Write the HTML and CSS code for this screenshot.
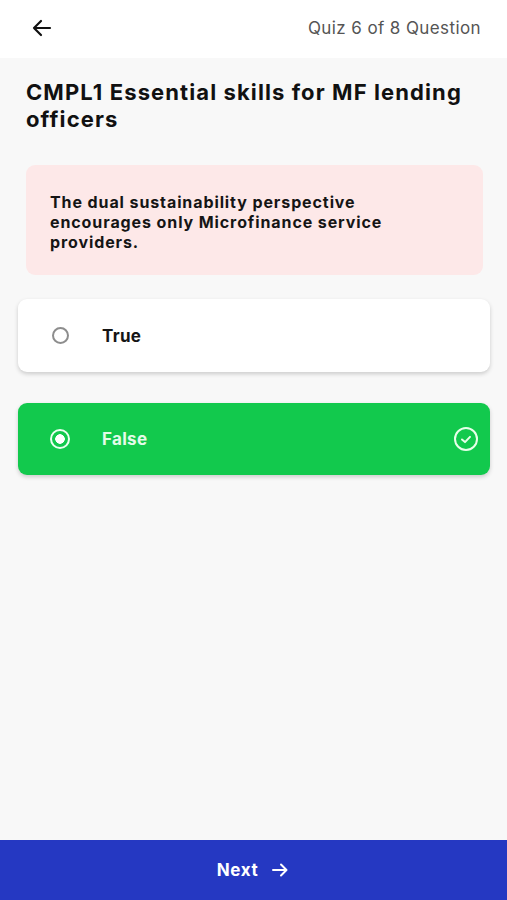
FILE: index.html
```html
<!DOCTYPE html>
<html lang="en">
<head>
    <meta charset="UTF-8">
    <title>Quiz</title>
    <link rel="stylesheet" href="styles.css">
</head>
<body>
    <div class="screen">
        <div class="topbar">
            <svg class="back" width="24" height="24" viewBox="0 0 24 24" fill="none" stroke="#111" stroke-width="2.2" stroke-linecap="round" stroke-linejoin="round">
                <path d="M20 12H4M11 5l-7 7 7 7"/>
            </svg>
            <span class="counter">Quiz 6 of 8 Question</span>
        </div>

        <div class="content">
            <h1 class="title">CMPL1 Essential skills for MF lending officers</h1>

            <div class="question">
                The dual sustainability perspective encourages only Microfinance service providers.
            </div>

            <div class="option">
                <span class="radio"></span>
                <span class="label">True</span>
            </div>

            <div class="option selected">
                <span class="radio"></span>
                <span class="label">False</span>
                <svg class="check" width="26" height="26" viewBox="0 0 26 26" fill="none" stroke="#e8ffe9" stroke-width="2" stroke-linecap="round" stroke-linejoin="round">
                    <circle cx="13" cy="13" r="11"/>
                    <path d="M9 13.5l3 2.6 5-5.2"/>
                </svg>
            </div>
        </div>

        <div class="next-bar">
            <span>Next</span>
            <svg width="20" height="20" viewBox="0 0 20 20" fill="none" stroke="#fff" stroke-width="2" stroke-linecap="round" stroke-linejoin="round">
                <path d="M3 10h13M11 4.5l5.5 5.5-5.5 5.5"/>
            </svg>
        </div>
    </div>
</body>
</html>
```

FILE: styles.css
```css
body {
    margin: 0;
    font-family: Inter, "Noto Sans", sans-serif;
    background: #f8f8f8;
}

.screen {
    display: flex;
    flex-direction: column;
    height: 900px;
}

.topbar {
    display: flex;
    align-items: center;
    justify-content: space-between;
    height: 58px;
    padding: 0 26px 0 30px;
    background: #fff;
}

.back {
    margin-top: -2px;
}

.counter {
    font-size: 17px;
    letter-spacing: 0.4px;
    color: #555;
    margin-top: -3px;
}

.content {
    flex: 1;
    padding: 21px 17px 0 18px;
}

.title {
    margin: 0 0 32px 8px;
    font-size: 22px;
    font-weight: 700;
    line-height: 27px;
    letter-spacing: 1.1px;
    color: #111;
}

.question {
    margin: 0 7px 24px 8px;
    padding: 27px 80px 23px 24px;
    background: #fde8e8;
    border-radius: 9px;
    font-size: 16px;
    font-weight: 700;
    line-height: 20px;
    letter-spacing: 0.9px;
    color: #151515;
}

.option {
    display: flex;
    align-items: center;
    height: 73px;
    padding: 0 11px 0 34px;
    margin-bottom: 31px;
    background: #fff;
    border-radius: 9px;
    box-shadow: 0 2px 4px rgba(0, 0, 0, 0.18);
}

.radio {
    width: 17px;
    height: 17px;
    border: 2px solid #8d8d8d;
    border-radius: 50%;
    box-sizing: border-box;
    margin-right: 33px;
}

.label {
    flex: 1;
    font-size: 17px;
    font-weight: 700;
    letter-spacing: 0.3px;
    color: #151515;
}

.option.selected {
    background: #12c94d;
    height: 72px;
}

.option.selected .radio {
    border: 2px solid #eafff0;
    width: 20px;
    height: 20px;
    margin-left: -2px;
    margin-right: 32px;
    background: radial-gradient(circle, #fff 0 4.5px, transparent 5px);
}

.option.selected .label {
    color: #e4fbe9;
}

.next-bar {
    display: flex;
    align-items: center;
    justify-content: center;
    gap: 12px;
    height: 60px;
    background: #2538c2;
    color: #fff;
    font-size: 17px;
    font-weight: 700;
    letter-spacing: 0.6px;
}
```
